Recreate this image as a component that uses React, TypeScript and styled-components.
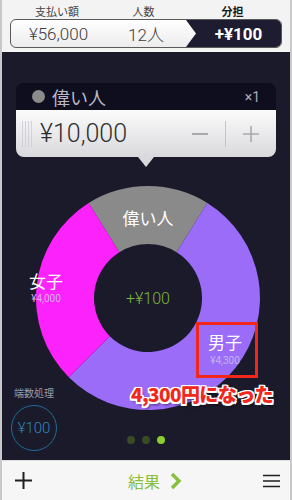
import styled, { createGlobalStyle } from 'styled-components';

const GlobalStyle = createGlobalStyle`
  html, body {
    margin: 0;
    padding: 0;
    background: #ffffff;
  }
  * { box-sizing: border-box; }
`

const JP = `"Roboto", "Liberation Sans", "Noto Sans CJK JP", sans-serif`;

const Screen = styled.div`
  width: 292px;
  height: 500px;
  display: flex;
  flex-direction: column;
  border-left: 2px solid #c9c9c9;
  border-right: 2px solid #c9c9c9;
  font-family: ${JP};
  overflow: hidden;
`
const Header = styled.div`
  height: 52px;
  background: #f3f3f3;
  padding: 2px 8px 0 8px;
  display: flex;
  flex-direction: column;
`
const Labels = styled.div`
  display: flex;
  height: 17px;
  align-items: center;
`
const Label = styled.div<{ $w: number; $bold?: boolean }>`
  width: ${p => p.$w}px;
  text-align: center;
  font-size: 11px;
  color: ${p => (p.$bold ? '#1a1a1a' : '#444')};
  font-weight: ${p => (p.$bold ? 700 : 400)};
  font-family: "Noto Sans CJK JP", sans-serif;
`
const Segments = styled.div`
  display: flex;
  height: 29px;
  border: 1.5px solid #5a5a5a;
  border-radius: 6px;
  overflow: hidden;
  background: linear-gradient(#ffffff, #ececec);
`
const Segment = styled.div<{ $w?: number; $active?: boolean }>`
  ${p => (p.$w ? `width: ${p.$w}px;` : 'flex: 1;')}
  display: flex;
  align-items: center;
  justify-content: center;
  font-size: 17px;
  color: ${p => (p.$active ? '#ffffff' : '#3c3c3c')};
  font-weight: ${p => (p.$active ? 700 : 300)};
  background: ${p => (p.$active ? '#1d1c30' : 'transparent')};
  ${p => (p.$active ? 'clip-path: polygon(0 0, 100% 0, 100% 100%, 0 100%, 10px 50%); padding-left: 10px;' : '')}
`
const Main = styled.div`
  flex: 1;
  background: #1a1a2b;
  display: flex;
  flex-direction: column;
`
const Popover = styled.div`
  margin: 31px 14px 0 14px;
  display: flex;
  flex-direction: column;
  align-items: center;
`
const TitleBar = styled.div`
  align-self: stretch;
  height: 27px;
  background: #0f0e1f;
  border-radius: 7px 7px 0 0;
  display: flex;
  align-items: center;
  padding: 0 16px 0 16px;
  gap: 7px;
  color: #b9b9c6;
`
const Dot = styled.span`
  width: 13px;
  height: 13px;
  border-radius: 50%;
  background: #8b8b8b;
`
const TitleText = styled.span`
  flex: 1;
  font-size: 18px;
  font-family: "Noto Sans CJK JP", sans-serif;
`
const Count = styled.span`
  font-size: 14px;
  color: #a8a8b6;
`
const Editor = styled.div`
  align-self: stretch;
  height: 47px;
  background: linear-gradient(#fbfbfb, #d9d9dd);
  border-radius: 0 0 8px 8px;
  display: flex;
  align-items: center;
  padding-left: 6px;
`
const Grip = styled.div`
  width: 11px;
  height: 26px;
  margin-right: 7px;
  background: repeating-linear-gradient(90deg, #d2d2d6 0 1px, transparent 1px 3px);
`
const Amount = styled.div`
  flex: 1;
  font-size: 25px;
  font-weight: 300;
  color: #2e2e2e;
`
const Stepper = styled.div`
  display: flex;
  align-items: center;
  height: 100%;
`
const StepButton = styled.div`
  width: 50px;
  display: flex;
  justify-content: center;
  align-items: center;
`
const StepDivider = styled.div`
  width: 1px;
  height: 26px;
  background: #c4c4c8;
`
const Arrow = styled.div`
  width: 0;
  height: 0;
  border-left: 8px solid transparent;
  border-right: 8px solid transparent;
  border-top: 10px solid #d9d9dd;
`
const Stage = styled.div`
  flex: 1;
  display: grid;
  position: relative;
  & > * { grid-area: 1 / 1; }
`
const ChartSvg = styled.svg`
  align-self: start;
`
const Rounding = styled.div`
  align-self: end;
  justify-self: start;
  margin: 0 0 9px 9px;
  display: flex;
  flex-direction: column;
  align-items: center;
  gap: 5px;
`
const RoundingLabel = styled.div`
  font-size: 10px;
  color: #9a9aa8;
  font-family: "Noto Sans CJK JP", sans-serif;
`
const RoundingCircle = styled.div`
  width: 46px;
  height: 46px;
  border: 1px solid #1f6e98;
  border-radius: 50%;
  display: flex;
  align-items: center;
  justify-content: center;
  color: #2f86b8;
  font-size: 15px;
  font-weight: 300;
`
const Pager = styled.div`
  align-self: end;
  justify-self: center;
  margin-bottom: 16px;
  display: flex;
  gap: 7px;
`
const PageDot = styled.span<{ $on?: boolean }>`
  width: 8px;
  height: 8px;
  border-radius: 50%;
  background: ${p => (p.$on ? '#8ccc2e' : '#3b4a26')};
`
const Highlight = styled.div`
  position: absolute;
  left: 194px;
  top: 155px;
  width: 62px;
  height: 56px;
  border: 3px solid #f2261b;
`
const Callout = styled.div`
  position: absolute;
  left: 129px;
  top: 213px;
  font-size: 19px;
  font-weight: 900;
  letter-spacing: -0.6px;
  color: #f2261b;
  font-family: "Noto Sans CJK JP", sans-serif;
  text-shadow: -1.5px -1.5px 0 #fff, 1.5px -1.5px 0 #fff, -1.5px 1.5px 0 #fff, 1.5px 1.5px 0 #fff,
    0 -1.5px 0 #fff, 0 1.5px 0 #fff, -1.5px 0 0 #fff, 1.5px 0 0 #fff, 2px 3px 3px rgba(0,0,0,0.6);
`
const Toolbar = styled.div`
  height: 40px;
  background: #f6f6f6;
  border-top: 1px solid #dedede;
  display: flex;
  align-items: center;
  justify-content: space-between;
  padding: 0 10px 0 12px;
`
const ResultButton = styled.div`
  display: flex;
  align-items: center;
  gap: 10px;
  margin-left: 14px;
  color: #88bf3c;
  font-size: 16px;
  font-family: "Noto Sans CJK JP", sans-serif;
`

type Slice = { from: number; to: number; color: string };

const CX = 146;
const CY = 131;
const R = 112;
const r = 54;

function point(angle: number, radius: number) {
  const a = ((angle - 90) * Math.PI) / 180;
  return `${(CX + radius * Math.cos(a)).toFixed(2)} ${(CY + radius * Math.sin(a)).toFixed(2)}`;
}

function arc({ from, to }: Slice) {
  const large = to - from > 180 ? 1 : 0;
  return `M ${point(from, R)} A ${R} ${R} 0 ${large} 1 ${point(to, R)} L ${point(to, r)} A ${r} ${r} 0 ${large} 0 ${point(from, r)} Z`;
}

const slices: Slice[] = [
  { from: -32, to: 32, color: '#8a8a8a' },
  { from: 32, to: 225, color: '#9a6cf8' },
  { from: 225, to: 328, color: '#fb22fb' },
];

function App() {
  return (
    <Screen>
      <GlobalStyle />
      <Header>
        <Labels>
          <Label $w={95}>支払い額</Label>
          <Label $w={80}>人数</Label>
          <Label $w={100} $bold>分担</Label>
        </Labels>
        <Segments>
          <Segment $w={95}>¥56,000</Segment>
          <Segment $w={80}>12人</Segment>
          <Segment $active>+¥100</Segment>
        </Segments>
      </Header>
      <Main>
        <Popover>
          <TitleBar>
            <Dot />
            <TitleText>偉い人</TitleText>
            <Count>×1</Count>
          </TitleBar>
          <Editor>
            <Grip />
            <Amount>¥10,000</Amount>
            <Stepper>
              <StepButton>
                <svg width="18" height="18" viewBox="0 0 18 18">
                  <path d="M1 9 H17" stroke="#a9a9ad" strokeWidth="2" />
                </svg>
              </StepButton>
              <StepDivider />
              <StepButton>
                <svg width="18" height="18" viewBox="0 0 18 18">
                  <path d="M1 9 H17 M9 1 V17" stroke="#a9a9ad" strokeWidth="1.6" />
                </svg>
              </StepButton>
            </Stepper>
          </Editor>
          <Arrow />
        </Popover>
        <Stage>
          <ChartSvg width="288" height="250" viewBox="0 0 288 250">
            {slices.map(s => (
              <path key={s.from} d={arc(s)} fill={s.color} />
            ))}
            <g fontFamily='"Noto Sans CJK JP", sans-serif' textAnchor="middle">
              <text x={CX} y={58} fill="#ffffff" fontSize="17">偉い人</text>
              <text x={44} y={121} fill="#ffffff" fontSize="17">女子</text>
              <text x={44} y={135} fill="#d9b0e8" fontSize="10" fontFamily="Roboto, sans-serif">¥4,000</text>
              <text x={223} y={182} fill="#ffffff" fontSize="17">男子</text>
              <text x={223} y={197} fill="#c5b3f0" fontSize="10" fontFamily="Roboto, sans-serif">¥4,300</text>
              <text x={CX} y={137} fill="#7fb53a" fontSize="16" fontFamily="Roboto, sans-serif" fontWeight="300">+¥100</text>
            </g>
          </ChartSvg>
          <Rounding>
            <RoundingLabel>端数処理</RoundingLabel>
            <RoundingCircle>¥100</RoundingCircle>
          </Rounding>
          <Pager>
            <PageDot />
            <PageDot />
            <PageDot $on />
          </Pager>
          <Highlight />
          <Callout>4,300円になった</Callout>
        </Stage>
      </Main>
      <Toolbar>
        <svg width="19" height="19" viewBox="0 0 19 19">
          <path d="M1 9.5 H18 M9.5 1 V18" stroke="#1f1f1f" strokeWidth="2" />
        </svg>
        <ResultButton>
          結果
          <svg width="12" height="18" viewBox="0 0 12 18">
            <path d="M2 2 L9 9 L2 16" stroke="#88bf3c" strokeWidth="3.4" fill="none" />
          </svg>
        </ResultButton>
        <svg width="17" height="14" viewBox="0 0 17 14">
          <path d="M0 1.5 H17 M0 7 H17 M0 12.5 H17" stroke="#1f1f1f" strokeWidth="1.6" />
        </svg>
      </Toolbar>
    </Screen>
  );
}

export default App;
